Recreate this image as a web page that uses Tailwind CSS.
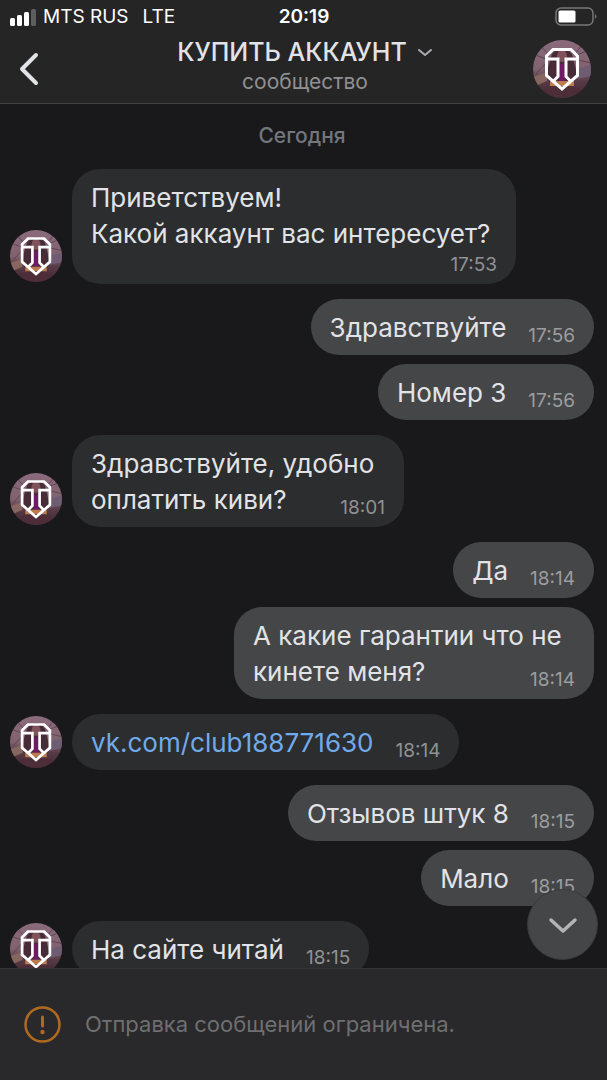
<!DOCTYPE html>
<html lang="ru">
<head>
    <meta charset="UTF-8">
    <meta name="viewport" content="width=device-width, initial-scale=1.0">
    <title>КУПИТЬ АККАУНТ</title>
    <script src="https://cdn.jsdelivr.net/npm/@tailwindcss/browser@4"></script>
</head>
<body class="h-screen flex flex-col overflow-hidden bg-[#19191b] font-[Inter,'Noto_Sans',sans-serif] text-[#e1e3e6]">

    <!-- community avatar, reused in the header and next to messages -->
    <svg class="absolute size-0" aria-hidden="true">
        <defs>
            <linearGradient id="sky" x1="0" y1="0" x2="0" y2="1">
                <stop offset="0" stop-color="#8a6a7c" />
                <stop offset="0.5" stop-color="#80626f" />
                <stop offset="0.7" stop-color="#573c47" />
                <stop offset="1" stop-color="#41252f" />
            </linearGradient>
            <clipPath id="round"><circle cx="29" cy="29" r="29" /></clipPath>
        </defs>
        <symbol id="avatar" viewBox="0 0 58 58">
            <g clip-path="url(#round)">
                <rect width="58" height="58" fill="url(#sky)" />
                <path d="M0 14l13 5M7 5l8 9M44 15l12-5M45 20l13 3M50 4l-8 10M14 22L3 34" stroke="#5c4250" stroke-width="1" fill="none" />
                <path d="M0 37l14-5v9L0 47z" fill="#86665f" />
                <path d="M44 29l14-4v11l-14 3z" fill="#6d5c72" />
                <path d="M19 14q10-11 20 0l5 20-4 12H18l-5-12z" fill="#472c38" />
                <ellipse cx="29" cy="16" rx="5" ry="6" fill="#80535a" />
                <path d="M26 24h6v17h-6z" fill="#6d1b63" />
                <path d="M17 41h24v5H17z" fill="#bd7b51" />
                <path d="M12 48l17-2 17 2-3 10H14z" fill="#4d2e38" />
            </g>
            <g fill="none" stroke="#fff" stroke-width="3">
                <path d="M20 9.500h18l6.500 6.500v19.500L29 49 13.500 35.500V16z" />
                <path d="M13.500 19H25v17.500l-5 5M44.500 19H33v17.500l5 5" />
            </g>
        </symbol>
    </svg>

    <header class="shrink-0 bg-[#252526] border-b border-[#414143]">
        <div class="grid grid-cols-3 items-center h-[34px] pl-[10px] pr-[9px] text-[19px] text-white">
            <div class="flex items-center gap-[6px] whitespace-nowrap">
                <svg class="w-[27px] h-[17px]" viewBox="0 0 27 17">
                    <rect x="0" y="9" width="5" height="8" rx="1.500" fill="#fff" />
                    <rect x="7" y="6" width="5" height="11" rx="1.500" fill="#fff" />
                    <rect x="14" y="3" width="5" height="14" rx="1.500" fill="#fff" />
                    <rect x="21" y="0" width="5" height="17" rx="1.500" fill="#5d5d5e" />
                </svg>
                <span>MTS RUS</span>
                <span class="pl-2">LTE</span>
            </div>
            <span class="text-center font-semibold">20:19</span>
            <svg class="justify-self-end w-[43px] h-[20px]" viewBox="0 0 43 20">
                <rect x="1" y="1" width="37" height="17" rx="5" fill="none" stroke="#77777a" stroke-width="1.500" />
                <rect x="3.500" y="3.500" width="17" height="12" rx="1.500" fill="#fff" />
                <path d="M40 7q3 2.500 0 5z" fill="#77777a" />
            </svg>
        </div>

        <div class="flex items-center justify-between h-[69px] pl-[19px] pr-[16px]">
            <button type="button" aria-label="Назад" class="w-[58px]">
                <svg class="w-[20px] h-[34px]" viewBox="0 0 20 34" fill="none" stroke="#e1e3e6" stroke-width="4" stroke-linecap="round" stroke-linejoin="round">
                    <path d="M17 3L3 17l14 14" />
                </svg>
            </button>
            <div class="pb-[6px] text-center">
                <h1 class="flex items-center justify-center gap-[10px] text-[25px] leading-[32px] font-medium">
                    КУПИТЬ АККАУНТ
                    <svg class="w-[16px] h-[10px]" viewBox="0 0 16 10" fill="none" stroke="#aaabad" stroke-width="2" stroke-linecap="round" stroke-linejoin="round">
                        <path d="M2 3l6 5 6-5" />
                    </svg>
                </h1>
                <p class="text-[21px] leading-[28px] text-[#909092]">сообщество</p>
            </div>
            <a href="#" aria-label="КУПИТЬ АККАУНТ"><svg class="size-[58px]"><use href="#avatar" /></svg></a>
        </div>
    </header>

    <main class="relative flex-1 min-h-0">
        <div class="h-full overflow-hidden flex flex-col gap-[15px] pt-[18px] pl-[10px] pr-[13px] text-[26px] leading-[36px]">
            <p class="mb-1 text-center text-[21px] leading-[28px] font-medium text-[#72767d]">Сегодня</p>

            <div class="flex items-end gap-[10px]">
                <svg class="shrink-0 size-[52px] mb-[2px]"><use href="#avatar" /></svg>
                <div class="w-[444px] rounded-[28px] bg-[#2c2d2f] px-[19px] pt-[11px] pb-[9px]">
                    <p>Приветствуем!<br>Какой аккаунт вас интересует?</p>
                    <time class="block mt-[3px] text-right text-[19px] leading-[20px] text-[#909194]">17:53</time>
                </div>
            </div>

            <div class="flex flex-col items-end gap-[9px]">
                <div class="flex items-end gap-[22px] rounded-[28px] bg-[#454648] px-[19px] pt-[11px] pb-[9px]">
                    <p>Здравствуйте</p>
                    <time class="text-[19px] leading-[20px] text-[#9c9da0]">17:56</time>
                </div>
                <div class="flex items-end gap-[22px] rounded-[28px] bg-[#454648] px-[19px] pt-[11px] pb-[9px]">
                    <p>Номер 3</p>
                    <time class="text-[19px] leading-[20px] text-[#9c9da0]">17:56</time>
                </div>
            </div>

            <div class="flex items-end gap-[10px]">
                <svg class="shrink-0 size-[52px] mb-[2px]"><use href="#avatar" /></svg>
                <div class="w-[332px] rounded-[28px] bg-[#2c2d2f] px-[19px] pt-[11px] pb-[9px]">
                    <p>Здравствуйте, удобно</p>
                    <div class="flex items-end justify-between">
                        <p>оплатить киви?</p>
                        <time class="text-[19px] leading-[20px] text-[#909194]">18:01</time>
                    </div>
                </div>
            </div>

            <div class="flex flex-col items-end gap-[9px]">
                <div class="flex items-end gap-[22px] rounded-[28px] bg-[#454648] px-[19px] pt-[11px] pb-[9px]">
                    <p>Да</p>
                    <time class="text-[19px] leading-[20px] text-[#9c9da0]">18:14</time>
                </div>
                <div class="w-[360px] rounded-[28px] bg-[#454648] px-[19px] pt-[11px] pb-[9px]">
                    <p>А какие гарантии что не</p>
                    <div class="flex items-end justify-between">
                        <p>кинете меня?</p>
                        <time class="text-[19px] leading-[20px] text-[#9c9da0]">18:14</time>
                    </div>
                </div>
            </div>

            <div class="flex items-end gap-[10px]">
                <svg class="shrink-0 size-[52px] mb-[2px]"><use href="#avatar" /></svg>
                <div class="flex items-end gap-[22px] rounded-[28px] bg-[#2c2d2f] px-[19px] pt-[11px] pb-[9px]">
                    <a href="#" class="text-[#71aaeb]">vk.com/club188771630</a>
                    <time class="text-[19px] leading-[20px] text-[#909194]">18:14</time>
                </div>
            </div>

            <div class="flex flex-col items-end gap-[9px]">
                <div class="flex items-end gap-[22px] rounded-[28px] bg-[#454648] px-[19px] pt-[11px] pb-[9px]">
                    <p>Отзывов штук 8</p>
                    <time class="text-[19px] leading-[20px] text-[#9c9da0]">18:15</time>
                </div>
                <div class="flex items-end gap-[22px] rounded-[28px] bg-[#454648] px-[19px] pt-[11px] pb-[9px]">
                    <p>Мало</p>
                    <time class="text-[19px] leading-[20px] text-[#9c9da0]">18:15</time>
                </div>
            </div>

            <div class="flex items-end gap-[10px]">
                <svg class="shrink-0 size-[52px] mb-[2px]"><use href="#avatar" /></svg>
                <div class="flex items-end gap-[22px] rounded-[28px] bg-[#2c2d2f] px-[19px] pt-[11px] pb-[9px]">
                    <p>На сайте читай</p>
                    <time class="text-[19px] leading-[20px] text-[#909194]">18:15</time>
                </div>
            </div>
        </div>

        <!-- scroll to the last message -->
        <button type="button" aria-label="Вниз" class="absolute right-[9px] bottom-[8px] flex items-center justify-center size-[71px] rounded-full border border-[#39393b] bg-[#454648]">
            <svg class="w-[30px] h-[18px]" viewBox="0 0 30 18" fill="none" stroke="#b3b4b7" stroke-width="3.500" stroke-linecap="round" stroke-linejoin="round">
                <path d="M3 4l12 11L27 4" />
            </svg>
        </button>
    </main>

    <footer class="shrink-0 flex items-center gap-[24px] h-[112px] pl-[24px] border-t border-[#363638] bg-[#29292b]">
        <svg class="size-[37px]" viewBox="0 0 37 37" fill="none" stroke="#b06a1f" stroke-linecap="round">
            <circle cx="18.500" cy="18.500" r="17" stroke-width="2.500" />
            <path d="M18.500 11v9" stroke-width="3" />
            <circle cx="18.500" cy="26" r="2.200" fill="#b06a1f" stroke="none" />
        </svg>
        <p class="text-[22px] text-[#6f6f71]">Отправка сообщений ограничена.</p>
    </footer>

</body>
</html>
